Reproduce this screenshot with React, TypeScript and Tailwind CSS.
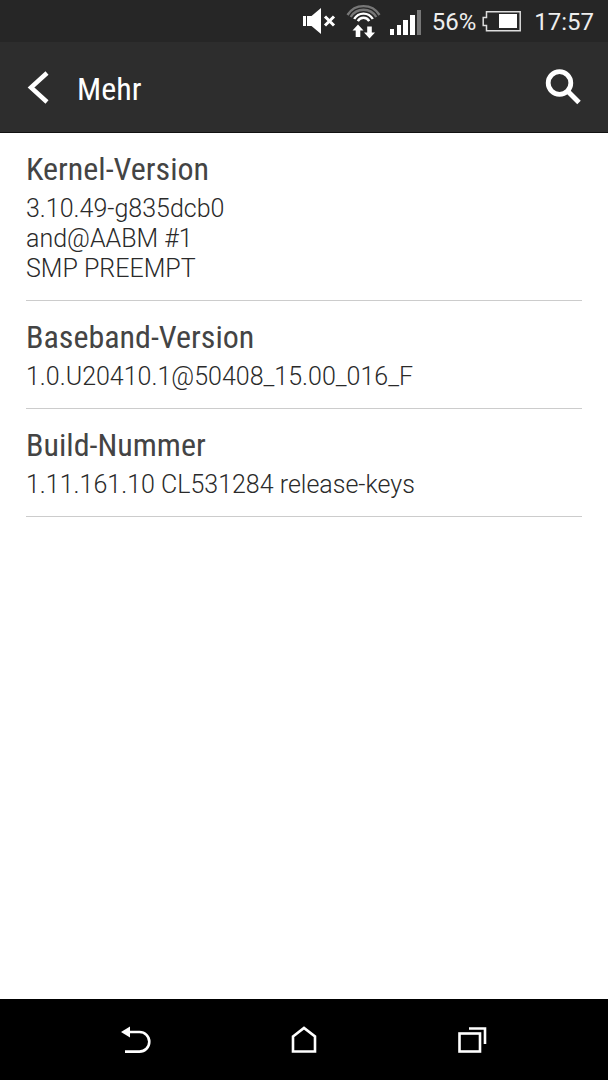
const ENTRIES = [
  { title: 'Kernel-Version', lines: ['3.10.49-g835dcb0', 'and@AABM #1', 'SMP PREEMPT'] },
  { title: 'Baseband-Version', lines: ['1.0.U20410.1@50408_15.00_016_F'] },
  { title: 'Build-Nummer', lines: ['1.11.161.10 CL531284 release-keys'] },
]

function MuteIcon() {
  return (
    <svg width="34" height="30" viewBox="0 0 34 30" fill="#fff" aria-hidden="true">
      <rect x="1" y="9" width="3" height="10" />
      <path d="M5 9h4.500L19 1v26L9.500 19H5z" />
      <path d="M23 9.500l9 9M32 9.500l-9 9" stroke="#fff" strokeWidth="3" />
    </svg>
  )
}

function WifiIcon() {
  return (
    <svg width="36" height="36" viewBox="0 0 36 36" fill="none" aria-hidden="true">
      <path d="M1.500 11A18.900 18.900 0 0 1 33.500 11" stroke="#777" strokeWidth="2.400" />
      <path d="M4.700 13A14.900 14.900 0 0 1 30.300 13" stroke="#777" strokeWidth="2.400" />
      <path d="M8.200 15A10.700 10.700 0 0 1 26.800 15" stroke="#fff" strokeWidth="2.400" />
      <path d="M11.800 17.200A6.500 6.500 0 0 1 23.200 17.200" stroke="#fff" strokeWidth="2.400" />
      <path d="M12 20.500l5.500 6h-3.200v6.500h-4.600v-6.500H6.500zM23.500 34.500l-5.500-6h3.200v-6h4.600v6h3.200z" fill="#fff" />
    </svg>
  )
}

function SignalIcon() {
  return (
    <svg width="32" height="28" viewBox="0 -2 32 28" fill="#fff" aria-hidden="true">
      <rect x="0" y="19" width="4" height="6" />
      <rect x="7" y="15" width="4" height="10" />
      <rect x="13" y="10" width="5" height="15" />
      <rect x="20" y="5" width="5" height="20" />
      <rect x="27" y="0" width="4" height="25" fill="#777" />
    </svg>
  )
}

function BatteryIcon() {
  return (
    <svg width="40" height="22" viewBox="0 0 40 22" fill="none" aria-hidden="true">
      <path d="M4.500 0.800H38.200V19.800H4.500V14.500H1.200V6.500H4.500z" stroke="#ddd" strokeWidth="1.500" />
      <rect x="17" y="3" width="18" height="14" fill="#fff" />
    </svg>
  )
}

function StatusBar() {
  return (
    <div className="flex h-[42px] items-center justify-end bg-[#262626] pt-0.5 pr-3.5 text-2xl leading-7 text-[#eee]">
      <MuteIcon />
      <div className="ml-2.5"><WifiIcon /></div>
      <div className="ml-2"><SignalIcon /></div>
      <span className="ml-2.5">56%</span>
      <div className="ml-1.5"><BatteryIcon /></div>
      <span className="ml-3">17:57</span>
    </div>
  )
}

function Header() {
  return (
    <header className="flex h-[91px] items-center border-b border-[#111] bg-[#2d2d2d] px-[27px] text-white">
      <button type="button" aria-label="Zurück">
        <svg width="22" height="34" viewBox="0 0 22 34" fill="none">
          <path d="M20 3L4 17.500l16 14.500" stroke="#fff" strokeWidth="4.500" />
        </svg>
      </button>
      <h1 className="mt-1 ml-7 flex-1 font-['Roboto_Condensed',sans-serif] text-[32px] leading-10">Mehr</h1>
      <button type="button" aria-label="Suchen">
        <svg width="36" height="36" viewBox="0 0 36 36" fill="none" stroke="#fff">
          <circle cx="14.500" cy="14" r="11.300" strokeWidth="4.800" />
          <path d="M22.500 22L34 33.500" strokeWidth="5" />
        </svg>
      </button>
    </header>
  )
}

function NavBar() {
  return (
    <nav className="grid h-[81px] grid-cols-3 items-center justify-items-center bg-black px-[52px]">
      <button type="button" aria-label="Zurück">
        <svg width="30" height="28" viewBox="0 0 30 28" fill="none">
          <path d="M8 6H18.500A9.800 9.800 0 0 1 18.500 25.600H4" stroke="#fff" strokeWidth="2.600" />
          <path d="M0 6l9-5.500v11z" fill="#fff" />
        </svg>
      </button>
      <button type="button" aria-label="Startseite">
        <svg width="26" height="28" viewBox="0 0 26 28" fill="none">
          <path d="M2 10.500L13 2l11 8.500V25.500H2z" stroke="#fff" strokeWidth="2.600" />
        </svg>
      </button>
      <button type="button" aria-label="Letzte Apps">
        <svg width="30" height="28" viewBox="0 0 30 28" fill="none" stroke="#fff" strokeWidth="2.600">
          <rect x="2.500" y="7.500" width="20.500" height="18" />
          <path d="M12 2.500h16V18" />
        </svg>
      </button>
    </nav>
  )
}

export default function App() {
  return (
    <div className="flex min-h-screen flex-col bg-white font-['Roboto',sans-serif]">
      <StatusBar />
      <Header />
      <main className="flex-1 px-[26px]">
        {ENTRIES.map((entry) => (
          <section key={entry.title} className="border-b border-[#ccc] pt-4 pb-4">
            <h2 className="font-['Roboto_Condensed',sans-serif] text-[32px] leading-10 text-[#444]">{entry.title}</h2>
            <div className="mt-[5px] text-[25px] leading-[30px] font-light text-[#2a2a2a]">
              {entry.lines.map((line) => (
                <p key={line}>{line}</p>
              ))}
            </div>
          </section>
        ))}
      </main>
      <NavBar />
    </div>
  )
}
